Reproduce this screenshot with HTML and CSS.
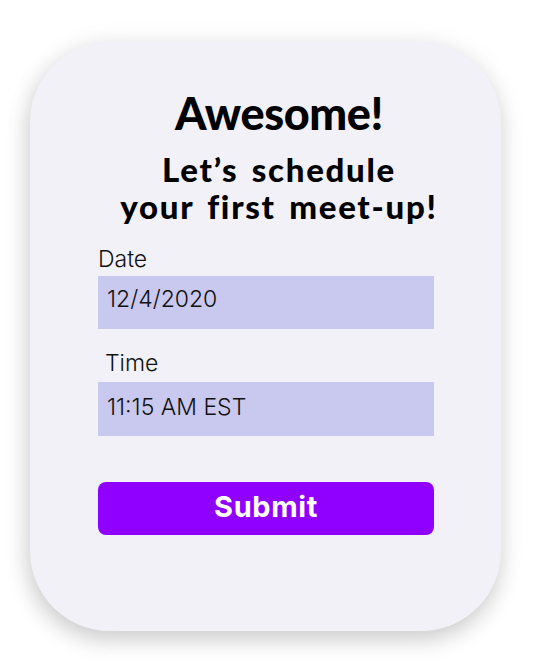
FILE: index.html
```html
<!DOCTYPE html>
<html lang="en">
<head>
<meta charset="utf-8">
<link rel="stylesheet" href="styles.css">
</head>
<body>
<main class="card">
  <header class="heading">
    <h1 class="title">Awesome!</h1>
    <h2 class="subtitle">Let’s schedule<br>your first meet-up!</h2>
  </header>
  <form class="form">
    <label class="label label-date">Date</label>
    <div class="field field-date">12/4/2020</div>
    <label class="label label-time">Time</label>
    <div class="field field-time">11:15 AM EST</div>
    <button type="button" class="submit">Submit</button>
  </form>
</main>
</body>
</html>
```
FILE: styles.css
```css
html, body {
  margin: 0;
  padding: 0;
  background: #ffffff;
}
body {
  width: 544px;
  height: 662px;
  overflow: hidden;
  padding-top: 42px;
  padding-left: 30px;
  box-sizing: border-box;
}
.card {
  width: 471px;
  height: 589px;
  box-sizing: border-box;
  background: #f2f1f7;
  border-radius: 80px;
  box-shadow: -2px 9px 22px rgba(0, 0, 0, 0.17), 0 2px 30px rgba(0, 0, 0, 0.06);
  padding: 0 0 0 68px;
  display: flex;
  flex-direction: column;
}
.heading {
  width: 362px;
  text-align: center;
  font-family: "Lato", sans-serif;
  color: #000;
}
.title {
  margin: 43px 0 0;
  font-size: 45px;
  font-weight: 900;
  line-height: 56px;
  letter-spacing: -0.4px;
}
.subtitle {
  margin: 10px 0 0;
  font-size: 33px;
  font-weight: 900;
  line-height: 37px;
  letter-spacing: 1.7px;
  word-spacing: 4px;
}
.form {
  display: flex;
  flex-direction: column;
  width: 336px;
  margin-top: 21px;
  font-family: "Inter", sans-serif;
}
.label {
  font-size: 23px;
  font-weight: 300;
  line-height: 26px;
  color: #111;
}
.label-time {
  margin-top: 21px;
  padding-left: 7px;
}
.field {
  box-sizing: border-box;
  height: 53px;
  background: #c9c8ef;
  font-size: 23px;
  font-weight: 300;
  color: #111;
  line-height: 47px;
  padding: 0 0 6px 9px;
}
.field-date {
  margin-top: 4px;
}
.field-time {
  margin-top: 6px;
  height: 54px;
  line-height: 50px;
  padding-bottom: 4px;
}
.submit {
  margin-top: 46px;
  height: 53px;
  border: 0;
  border-radius: 8px;
  background: #9000ff;
  color: #ffffff;
  font-family: "Inter", sans-serif;
  font-weight: 700;
  font-size: 29px;
  letter-spacing: 0.6px;
  line-height: 49px;
  padding: 0 0 4px;
}
```
